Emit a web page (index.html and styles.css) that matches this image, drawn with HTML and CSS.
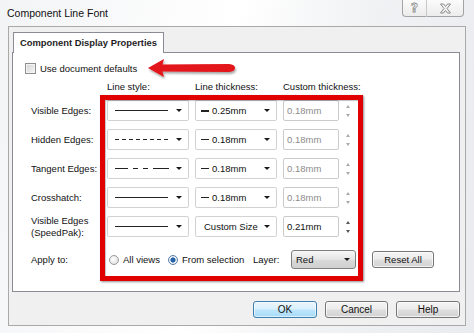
FILE: index.html
```html
<!DOCTYPE html>
<html>
<head>
<meta charset="utf-8">
<link rel="stylesheet" href="styles.css">
</head>
<body>
<div class="window">
  <div class="titlebar">
    <span class="title">Component Line Font</span>
    <div class="caption">
      <div class="cap help"><span class="qmark">?</span></div>
      <div class="cap close">
        <svg width="13" height="11" viewBox="0 0 13 11"><path d="M1.5 1 H4.5 L6.5 3.5 L8.5 1 H11.5 L8 5.5 L11.5 10 H8.5 L6.5 7.5 L4.5 10 H1.5 L5 5.5 Z" fill="none" stroke="#8a8a8a" stroke-width="1"/></svg>
      </div>
    </div>
  </div>
  <div class="client">
    <div class="tabs"><div class="tab">Component Display Properties</div></div>
    <div class="panel">
      <div class="chk-row"><span class="checkbox"></span><span>Use document defaults</span></div>

      <div class="grid">
        <span></span><span class="hdr">Line style:</span><span class="hdr">Line thickness:</span><span class="hdr">Custom thickness:</span>

        <span class="lbl">Visible Edges:</span>
        <div class="combo"><span class="ls ls-solid"></span><span class="caret"></span></div>
        <div class="combo"><span class="th"><span class="dash thick"></span>0.25mm</span><span class="caret"></span></div>
        <div class="custom"><span class="inp dis">0.18mm</span><span class="spin dis"><span class="up"></span><span class="dn"></span></span></div>

        <span class="lbl">Hidden Edges:</span>
        <div class="combo"><span class="ls ls-dash"></span><span class="caret"></span></div>
        <div class="combo"><span class="th"><span class="dash"></span>0.18mm</span><span class="caret"></span></div>
        <div class="custom"><span class="inp dis">0.18mm</span><span class="spin dis"><span class="up"></span><span class="dn"></span></span></div>

        <span class="lbl">Tangent Edges:</span>
        <div class="combo"><svg class="ls-svg" width="54" height="3" viewBox="0 0 54 3"><line x1="0" y1="1.5" x2="54" y2="1.5" stroke="#222" stroke-width="1" stroke-dasharray="13 5 5 5 5 5 16"/></svg><span class="caret"></span></div>
        <div class="combo"><span class="th"><span class="dash"></span>0.18mm</span><span class="caret"></span></div>
        <div class="custom"><span class="inp dis">0.18mm</span><span class="spin dis"><span class="up"></span><span class="dn"></span></span></div>

        <span class="lbl">Crosshatch:</span>
        <div class="combo"><span class="ls ls-solid"></span><span class="caret"></span></div>
        <div class="combo"><span class="th"><span class="dash"></span>0.18mm</span><span class="caret"></span></div>
        <div class="custom"><span class="inp dis">0.18mm</span><span class="spin dis"><span class="up"></span><span class="dn"></span></span></div>

        <span class="lbl two">Visible Edges<br>(SpeedPak):</span>
        <div class="combo"><span class="ls ls-solid"></span><span class="caret"></span></div>
        <div class="combo"><span class="th cs">Custom Size</span><span class="caret"></span></div>
        <div class="custom"><span class="inp">0.21mm</span><span class="spin"><span class="up"></span><span class="dn"></span></span></div>
      </div>

      <div class="apply">
        <span class="lbl">Apply to:</span>
        <span class="opt"><span class="radio"></span>All views</span>
        <span class="opt"><span class="radio on"></span>From selection</span>
        <span class="lbl">Layer:</span>
        <div class="select"><span>Red</span><span class="caret"></span></div>
        <div class="btn reset">Reset All</div>
      </div>

      <div class="annot-box"></div>
      <svg class="arrow" width="92" height="26" viewBox="0 0 92 26">
        <defs>
          <filter id="sh" x="-10%" y="-30%" width="130%" height="180%">
            <feDropShadow dx="1" dy="2" stdDeviation="1.2" flood-color="#000" flood-opacity="0.35"/>
          </filter>
        </defs>
        <path d="M1 10 L17 1 L15.5 6.5 L82 6 Q88 6.5 88 10 Q88 13.5 82 14 L15.5 13.5 L17 19 Z" fill="#e3141a" filter="url(#sh)"/>
      </svg>
    </div>
    <div class="buttons">
      <div class="btn default">OK</div>
      <div class="btn">Cancel</div>
      <div class="btn">Help</div>
    </div>
  </div>
</div>
</body>
</html>
```

FILE: styles.css
```css
* { box-sizing: border-box; }
body {
  margin: 0;
  font-family: "Liberation Sans", Arial, sans-serif;
  font-size: 9.5px;
  color: #111;
}
.window {
  width: 474px;
  height: 333px;
  overflow: hidden;
  display: flex;
  flex-direction: column;
  background: linear-gradient(100deg, #f3f4f6 0%, #ffffff 45%, #f1f2f4 70%, #e9ebee 100%);
}
.titlebar {
  height: 26px;
  flex: none;
  display: flex;
  justify-content: space-between;
  align-items: flex-start;
  padding: 0 10px 0 7px;
}
.title {
  font-size: 10.5px;
  line-height: 27px;
  color: #111;
}
.caption { display: flex; margin-top: -1px; }
.cap {
  height: 18px;
  border: 1px solid #a3a3a3;
  background: linear-gradient(#fbfbfb, #ececec);
  display: flex;
  align-items: center;
  justify-content: center;
}
.cap.help { width: 25px; border-radius: 0 0 0 4px; border-right: 1px solid #c8c8c8; }
.cap.close { width: 37px; border-radius: 0 0 4px 0; border-left: none; }
.qmark {
  font-family: "DejaVu Sans", sans-serif;
  font-size: 12px;
  font-weight: bold;
  color: #fff;
  -webkit-text-stroke: 0.8px #8a8a8a;
  line-height: 12px;
}
.client {
  flex: 1;
  margin: 0 8px 7px;
  border: 1px solid #a9a9a9;
  background: #f0f0f0;
  padding: 5px 5px 0 3px;
  display: flex;
  flex-direction: column;
}
.tabs {
  display: flex;
  padding-left: 1px;
  height: 21px;
  margin-bottom: -1px;
  position: relative;
  z-index: 1;
}
.tab {
  border: 1px solid #898c95;
  border-bottom: none;
  background: #fff;
  padding: 0 6px;
  font-weight: bold;
  font-size: 9.4px;
  line-height: 20px;
  color: #1e1e1e;
}
.panel {
  position: relative;
  height: 240px;
  flex: none;
  border: 1px solid #898c95;
  background: #fff;
  padding: 10px 0 0 12px;
}
.chk-row {
  display: flex;
  align-items: center;
  height: 11px;
  gap: 4px;
}
.checkbox {
  width: 11px;
  height: 11px;
  border: 1px solid #8f8f8f;
  background: linear-gradient(135deg, #d4d4d4, #f6f6f6);
  box-shadow: inset 0 0 0 1px #f4f4f4;
}
.grid {
  margin: 7px 0 0 6px;
  display: grid;
  grid-template-columns: 70px 82px 82px 80px;
  grid-template-rows: 11px repeat(5, 21px);
  column-gap: 6px;
  row-gap: 8px;
  align-items: center;
}
.hdr { line-height: 11px; white-space: nowrap; }
.lbl { white-space: nowrap; }
.lbl.two { line-height: 12px; }
.combo {
  height: 21px;
  border: 1px solid #d2d2d2;
  border-radius: 2px;
  background: #fff;
  display: flex;
  align-items: center;
  justify-content: space-between;
  padding: 0 6px 0 7px;
}
.ls { width: 53px; height: 1px; }
.ls-solid { background: #222; }
.ls-dash { background: repeating-linear-gradient(90deg, #222 0 4px, transparent 4px 7px); }
.ls-svg { display: block; }
.caret {
  width: 0;
  height: 0;
  border-left: 3px solid transparent;
  border-right: 3px solid transparent;
  border-top: 3px solid #1a1a1a;
}
.th { display: flex; align-items: center; margin-left: -2px; }
.th.cs { margin-left: 1px; }
.dash { width: 8px; height: 1px; background: #222; margin-right: 3px; }
.dash.thick { height: 2px; }
.custom { display: flex; align-items: center; }
.inp {
  width: 56px;
  height: 21px;
  border: 1px solid #cbcbcb;
  border-radius: 2px;
  padding-left: 3px;
  display: flex;
  align-items: center;
  color: #111;
}
.inp.dis { color: #8c8c8c; }
.spin {
  display: flex;
  flex-direction: column;
  gap: 6px;
  margin-left: 7px;
}
.spin .up, .spin .dn {
  width: 0; height: 0;
  border-left: 2.5px solid transparent;
  border-right: 2.5px solid transparent;
}
.spin .up { border-bottom: 3px solid #555; }
.spin .dn { border-top: 3px solid #555; }
.spin.dis .up { border-bottom-color: #aaa; }
.spin.dis .dn { border-top-color: #aaa; }
.apply {
  margin: 13px 0 0 6px;
  display: grid;
  grid-template-columns: 78px 59px 85px 38px 65px 62px;
  column-gap: 0;
  height: 19px;
  align-items: center;
}
.apply .reset { margin-left: 16px; height: 17px; width: 62px; }
.opt { display: flex; align-items: center; gap: 4px; white-space: nowrap; }
.radio {
  width: 10px;
  height: 10px;
  border-radius: 50%;
  border: 1px solid #9a9a9a;
  background: radial-gradient(circle at 40% 40%, #ffffff, #d8d8d8);
}
.radio.on { border-color: #5a7fa6; background: radial-gradient(circle, #2563a8 0 2.3px, #e9eef4 2.8px); }
.select {
  width: 65px;
  height: 19px;
  border: 1px solid #7f7f7f;
  border-radius: 3px;
  background: linear-gradient(#f7f7f7, #e5e5e5 50%, #d9d9d9 51%, #d0d0d0);
  display: flex;
  align-items: center;
  justify-content: space-between;
  padding: 0 5px 0 4px;
}
.annot-box {
  position: absolute;
  left: 87px;
  top: 42px;
  width: 263px;
  height: 186px;
  border: 5px solid #e00000;
  box-shadow: 1px 1px 2px rgba(0,0,0,0.45), inset 1px 1px 1px rgba(0,0,0,0.25);
}
.arrow {
  position: absolute;
  left: 134px;
  top: 5px;
}
.buttons {
  display: flex;
  justify-content: flex-end;
  gap: 8px;
  margin-top: 9px;
}
.btn {
  width: 64px;
  height: 17px;
  border: 1px solid #767676;
  border-radius: 3px;
  background: linear-gradient(#f4f4f4, #ececec 48%, #dedede 52%, #d3d3d3);
  box-shadow: inset 0 0 0 1px rgba(255,255,255,0.7);
  display: flex;
  align-items: center;
  justify-content: center;
  font-size: 10px;
  color: #111;
}
.apply .btn { font-size: 9.5px; }
.buttons .btn:nth-child(2) { width: 63px; }
.btn.default {
  border-color: #3c7fb1;
  background: linear-gradient(#eaf6fd, #d9f0fc 48%, #bee6fd 52%, #a7d9f5);
  box-shadow: inset 0 0 0 1px rgba(255,255,255,0.6);
}
```
